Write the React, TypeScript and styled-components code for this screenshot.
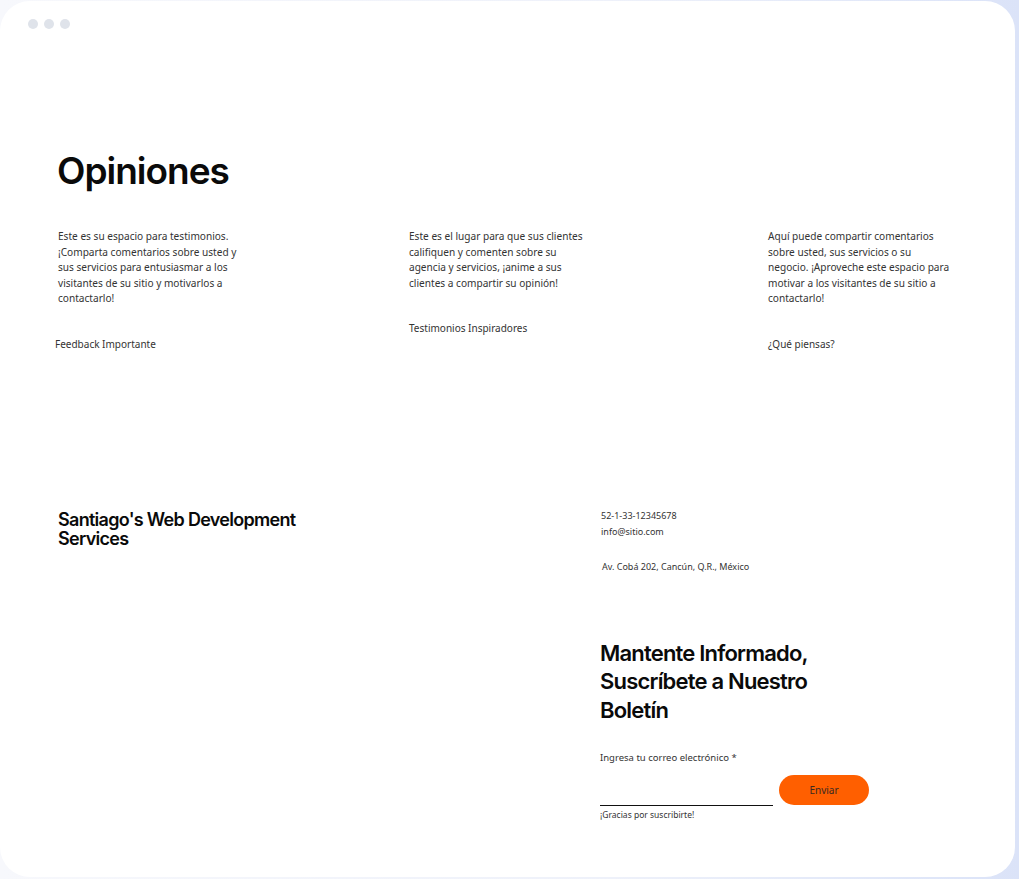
import React from "react";
import styled, { createGlobalStyle } from "styled-components";

const Global = createGlobalStyle`
  html, body { margin: 0; padding: 0; }
  body {
    background: linear-gradient(90deg, #f7f8fc 0%, #eef1fa 60%, #dbe3f8 100%);
    font-family: "Noto Sans", "Liberation Sans", sans-serif;
    width: 1019px;
    height: 879px;
    overflow: hidden;
  }
`;

const Card = styled.div`
  box-sizing: border-box;
  margin-top: 1px;
  width: 1015px;
  height: 876px;
  background: #ffffff;
  border-radius: 30px;
  display: flex;
  flex-direction: column;
`;

const Dots = styled.div`
  display: flex;
  gap: 6px;
  padding: 18px 0 0 28px;
`;

const Dot = styled.span`
  width: 10px;
  height: 10px;
  border-radius: 50%;
  background: #dfe3ea;
`;

const Section = styled.section`
  padding: 119px 0 0 57px;
`;

const Heading = styled.h1`
  margin: 0;
  font-family: Inter, "Noto Sans", sans-serif;
  font-weight: 600;
  font-size: 37px;
  letter-spacing: -1px;
  line-height: 46px;
  color: #0a0a0a;
`;

const Columns = styled.div`
  display: grid;
  grid-template-columns: 351px 359px 200px;
  margin-top: 35px;
  padding-left: 1px;
`;

const Col = styled.div`
  display: flex;
  flex-direction: column;
`;

const Body = styled.p<{ $w: number }>`
  margin: 0;
  width: ${(p) => p.$w}px;
  font-size: 10.1px;
  line-height: 15.5px;
  color: #333;
`;

const Label = styled.div<{ $shift?: number }>`
  margin-top: 30px;
  margin-left: ${(p) => p.$shift ?? 0}px;
  font-size: 10px;
  line-height: 14px;
  color: #333;
`;

const Footer = styled.div`
  display: grid;
  grid-template-columns: 542px 300px;
  padding: 153px 0 0 58px;
`;

const Brand = styled.h2`
  margin: 6px 0 0 0;
  font-family: Inter, "Noto Sans", sans-serif;
  font-weight: 600;
  font-size: 18px;
  line-height: 19px;
  letter-spacing: -0.7px;
  color: #0a0a0a;
  width: 250px;
`;

const Right = styled.div`
  display: flex;
  flex-direction: column;
  padding-top: 4px;
`;

const Small = styled.div<{ $mt?: number; $ml?: number }>`
  margin-top: ${(p) => p.$mt ?? 0}px;
  margin-left: ${(p) => p.$ml ?? 1}px;
  font-size: 9px;
  line-height: 16px;
  color: #333;
`;

const News = styled.h3`
  margin: 64px 0 0 0;
  font-family: Inter, "Noto Sans", sans-serif;
  font-weight: 600;
  font-size: 22px;
  line-height: 28.5px;
  letter-spacing: -0.8px;
  color: #0a0a0a;
  width: 230px;
`;

const FieldLabel = styled.div`
  margin-top: 27px;
  font-size: 9.5px;
  line-height: 14px;
  color: #333;
`;

const FormRow = styled.div`
  display: flex;
  align-items: flex-end;
  gap: 6px;
  margin-top: 10px;
`;

const Input = styled.div`
  width: 173px;
  height: 30px;
  border-bottom: 1px solid #111;
`;

const Button = styled.button`
  width: 90px;
  height: 30px;
  border: none;
  border-radius: 15px;
  background: #ff5f00;
  color: #3a2a20;
  font-family: "Noto Sans", sans-serif;
  font-size: 10px;
  margin-bottom: 1px;
`;

const Thanks = styled.div`
  margin-top: 2px;
  font-size: 8.5px;
  line-height: 14px;
  color: #333;
`;

export default function App() {
  return (
    <>
      <Global />
      <Card>
        <Dots>
          <Dot />
          <Dot />
          <Dot />
        </Dots>
        <Section>
          <Heading>Opiniones</Heading>
          <Columns>
            <Col>
              <Body $w={190}>
                Este es su espacio para testimonios. ¡Comparta comentarios sobre usted y sus servicios para entusiasmar a los visitantes de su sitio y motivarlos a contactarlo!
              </Body>
              <Label $shift={-3}>Feedback Importante</Label>
            </Col>
            <Col>
              <Body $w={185}>
                Este es el lugar para que sus clientes califiquen y comenten sobre su agencia y servicios, ¡anime a sus clientes a compartir su opinión!
              </Body>
              <Label>Testimonios Inspiradores</Label>
            </Col>
            <Col>
              <Body $w={186}>
                Aquí puede compartir comentarios sobre usted, sus servicios o su negocio. ¡Aproveche este espacio para motivar a los visitantes de su sitio a contactarlo!
              </Body>
              <Label>¿Qué piensas?</Label>
            </Col>
          </Columns>
        </Section>
        <Footer>
          <Brand>Santiago's Web Development Services</Brand>
          <Right>
            <Small>52-1-33-12345678</Small>
            <Small>info@sitio.com</Small>
            <Small $mt={19} $ml={2}>Av. Cobá 202, Cancún, Q.R., México</Small>
            <News>Mantente Informado, Suscríbete a Nuestro Boletín</News>
            <FieldLabel>Ingresa tu correo electrónico *</FieldLabel>
            <FormRow>
              <Input />
              <Button>Enviar</Button>
            </FormRow>
            <Thanks>¡Gracias por suscribirte!</Thanks>
          </Right>
        </Footer>
      </Card>
    </>
  );
}
